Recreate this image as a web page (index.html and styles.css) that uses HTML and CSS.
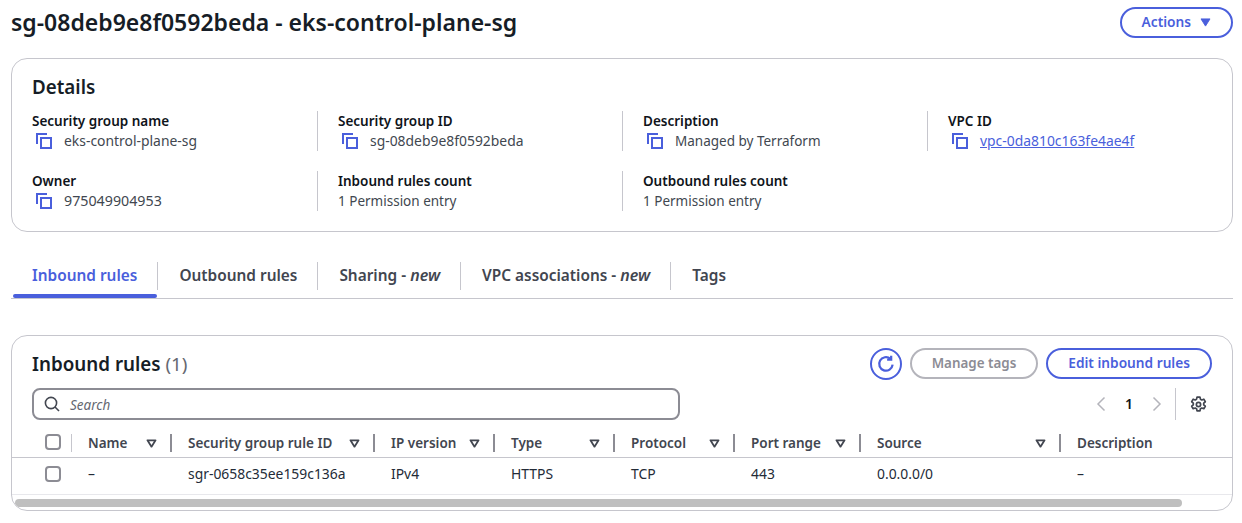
FILE: index.html
```html
<!DOCTYPE html>
<html lang="en">
<head>
<meta charset="utf-8">
<title>sg-08deb9e8f0592beda</title>
<link rel="stylesheet" href="styles.css">
</head>
<body>
<svg class="defs" width="0" height="0">
  <symbol id="copy" viewBox="0 0 16 16">
    <path d="M1 11V1h10" fill="none" stroke="currentColor" stroke-width="2"/>
    <rect x="5" y="5" width="10" height="10" fill="none" stroke="currentColor" stroke-width="2"/>
  </symbol>
  <symbol id="caret" viewBox="0 0 12 10">
    <path d="M1.500 1.500h9L6 8.500z" fill="none" stroke="currentColor" stroke-width="2" stroke-linejoin="round"/>
  </symbol>
</svg>
<header class="page-head">
  <h1>sg-08deb9e8f0592beda - eks-control-plane-sg</h1>
  <button class="btn btn-primary btn-actions">Actions
    <svg class="actions-caret" viewBox="0 0 12 10"><path d="M1 1h10L6 9z" fill="currentColor" stroke="currentColor" stroke-linejoin="round"/></svg>
  </button>
</header>

<section class="card details">
  <h2>Details</h2>
  <div class="kv-grid">
    <div class="kv"><div class="k">Security group name</div><div class="v id"><svg class="copy"><use href="#copy"/></svg>eks-control-plane-sg</div></div>
    <div class="kv"><div class="k">Security group ID</div><div class="v id"><svg class="copy"><use href="#copy"/></svg>sg-08deb9e8f0592beda</div></div>
    <div class="kv"><div class="k">Description</div><div class="v"><svg class="copy"><use href="#copy"/></svg>Managed by Terraform</div></div>
    <div class="kv"><div class="k">VPC ID</div><div class="v id"><svg class="copy"><use href="#copy"/></svg><a href="#">vpc-0da810c163fe4ae4f</a></div></div>
    <div class="kv"><div class="k">Owner</div><div class="v num"><svg class="copy"><use href="#copy"/></svg>975049904953</div></div>
    <div class="kv"><div class="k">Inbound rules count</div><div class="v">1 Permission entry</div></div>
    <div class="kv"><div class="k">Outbound rules count</div><div class="v">1 Permission entry</div></div>
  </div>
</section>

<nav class="tabs">
  <a class="tab active">Inbound rules</a>
  <a class="tab">Outbound rules</a>
  <a class="tab">Sharing - <em>new</em></a>
  <a class="tab">VPC associations - <em>new</em></a>
  <a class="tab">Tags</a>
</nav>

<section class="card rules">
  <div class="rules-head">
    <h2>Inbound rules <span class="count">(1)</span></h2>
    <div class="actions">
      <button class="btn-icon" aria-label="Refresh">
        <svg viewBox="0 0 16 16" width="18" height="18"><path d="M13.900 8.600A6 6 0 1 1 11.900 3.400" fill="none" stroke="currentColor" stroke-width="2"/><path d="M12.600 0.600v3.600H9" fill="none" stroke="currentColor" stroke-width="2"/></svg>
      </button>
      <button class="btn btn-disabled">Manage tags</button>
      <button class="btn btn-primary">Edit inbound rules</button>
    </div>
  </div>
  <div class="tools">
    <div class="search">
      <svg viewBox="0 0 16 16" width="16" height="16"><circle cx="7" cy="7" r="5.600" fill="none" stroke="currentColor" stroke-width="1.600"/><path d="M11 11l4 4" stroke="currentColor" stroke-width="1.600"/></svg>
      <span>Search</span>
    </div>
    <div class="pager">
      <svg class="chev" viewBox="0 0 10 16"><path d="M8.500 1.500 2 8l6.500 6.500" fill="none" stroke="currentColor" stroke-width="1.500"/></svg>
      <span class="page-num">1</span>
      <svg class="chev" viewBox="0 0 10 16"><path d="M1.500 1.500 8 8l-6.500 6.500" fill="none" stroke="currentColor" stroke-width="1.500"/></svg>
      <span class="pager-sep"></span>
      <svg class="gear" viewBox="0 0 16 16"><circle cx="8" cy="8" r="2" fill="none" stroke="currentColor" stroke-width="1.600"/><path d="M6.600 1h2.800l.4 2 1.300.7 1.900-.7 1.400 2.400-1.500 1.300v1.600l1.500 1.300-1.400 2.400-1.900-.7-1.300.7-.4 2H6.600l-.4-2-1.300-.7-1.900.7-1.400-2.400 1.500-1.300V6.700L1.600 5.400 3 3l1.900.7 1.300-.7z" fill="none" stroke="currentColor" stroke-width="1.600" stroke-linejoin="round"/></svg>
    </div>
  </div>
  <div class="table-wrap">
    <table>
      <thead>
        <tr>
          <th class="c-check"><span class="check"></span></th>
          <th class="c-name"><div class="th">Name<svg class="caret"><use href="#caret"/></svg></div></th>
          <th class="c-id"><div class="th">Security group rule ID<svg class="caret"><use href="#caret"/></svg></div></th>
          <th class="c-ip"><div class="th">IP version<svg class="caret"><use href="#caret"/></svg></div></th>
          <th class="c-type"><div class="th">Type<svg class="caret"><use href="#caret"/></svg></div></th>
          <th class="c-proto"><div class="th">Protocol<svg class="caret"><use href="#caret"/></svg></div></th>
          <th class="c-port"><div class="th">Port range<svg class="caret"><use href="#caret"/></svg></div></th>
          <th class="c-source"><div class="th">Source<svg class="caret"><use href="#caret"/></svg></div></th>
          <th class="c-desc"><div class="th">Description</div></th>
        </tr>
      </thead>
      <tbody>
        <tr>
          <td class="c-check"><span class="check"></span></td>
          <td>–</td>
          <td>sgr-0658c35ee159c136a</td>
          <td>IPv4</td>
          <td>HTTPS</td>
          <td>TCP</td>
          <td>443</td>
          <td>0.0.0.0/0</td>
          <td>–</td>
        </tr>
      </tbody>
    </table>
  </div>
  <div class="scrollbar"><div class="thumb"></div></div>
</section>
</body>
</html>
```
FILE: styles.css
```css
* { box-sizing: border-box; }
html, body { margin: 0; padding: 0; }
body {
  background: #fff;
  color: #0f141a;
  font-family: "Noto Sans", "Open Sans", sans-serif;
  font-size: 14px;
  line-height: 20px;
  padding: 0 9px 0 11px;
  height: 523px;
  overflow: hidden;
}
.defs { position: absolute; }
.page-head {
  display: flex;
  justify-content: space-between;
  align-items: flex-start;
  padding-top: 7px;
  height: 46px;
}
h1 { margin: 0; font-size: 23px; line-height: 30px; font-weight: 600; color: #161d26; }
.btn {
  font: 600 13.700px/20px "Noto Sans", "Open Sans", sans-serif;
  height: 31px;
  padding: 0 20px 1px;
  border-radius: 16px;
  background: #fff;
  display: inline-flex;
  align-items: center;
}
.btn-primary { border: 2px solid #4a5fdc; color: #4a5fdc; }
.btn-disabled { border: 2px solid #b4b4bb; color: #8c8c94; font-size: 13.400px; }
.btn-actions { gap: 9px; }
.actions-caret { width: 11px; height: 9px; }
.card {
  border: 1px solid #c6c6cd;
  border-radius: 16px;
  background: #fff;
}
.details { margin-top: 12px; height: 174px; padding: 16px 20px 0; }
h2 { margin: 0; font-size: 18.800px; line-height: 24px; font-weight: 600; color: #161d26; }
.kv-grid {
  display: grid;
  grid-template-columns: 285px 305px 305px 1fr;
  row-gap: 20px;
  margin-top: 12px;
}
.kv { border-left: 1px solid #c6c6cd; padding-left: 20px; height: 40px; }
.kv:nth-child(4n+1) { border-left: 0; padding-left: 0; }
.k { font-weight: 600; font-size: 13.500px; color: #0f141a; }
.v { display: flex; align-items: center; color: #414750; font-size: 13.500px; }
.v.id { font-size: 13.900px; }
.v.num { font-size: 14.250px; }
.copy { width: 16px; height: 16px; color: #4a5fdc; margin: 0 12px 0 4px; flex: none; }
.v a { color: #4a5fdc; text-decoration: underline; }
.tabs {
  display: flex;
  align-items: stretch;
  margin-top: 30px;
  height: 37px;
  border-bottom: 1px solid #c6c6cd;
  position: relative;
  font-weight: 600;
  font-size: 15.400px;
  color: #424650;
}
.tab {
  padding: 0 20px 0 21px;
  height: 28px;
  line-height: 27px;
  border-right: 1px solid #c6c6cd;
  position: relative;
  white-space: nowrap;
}
.tab:last-child { border-right: 0; }
.tab em { font-weight: 600; font-size: 16px; }
.tab.active { color: #4a5fdc; }
.tab.active::after {
  content: "";
  position: absolute;
  right: 0;
  left: 2px;
  top: 32px;
  height: 4px;
  border-radius: 2px;
  background: #4a5fdc;
}
.rules {
  margin-top: 36px;
  height: 176px;
  overflow: hidden;
  position: relative;
}
.rules-head {
  display: flex;
  justify-content: space-between;
  align-items: center;
  padding: 12px 20px 0;
}
.count { color: #656871; font-weight: 400; }
.actions { display: flex; align-items: flex-start; gap: 8px; }
.btn-icon {
  width: 32px;
  height: 32px;
  border-radius: 50%;
  border: 2px solid #4a5fdc;
  color: #4a5fdc;
  background: #fff;
  display: flex;
  align-items: center;
  justify-content: center;
  padding: 0;
}
.tools {
  display: flex;
  align-items: center;
  justify-content: space-between;
  padding: 8px 20px 0;
  height: 40px;
}
.search {
  width: 648px;
  height: 32px;
  border: 2px solid #8c8c94;
  border-radius: 8px;
  display: flex;
  align-items: center;
  gap: 10px;
  padding-left: 10px;
  color: #424650;
  font-style: italic;
}
.search span { color: #656871; font-size: 13.500px; padding-top: 2px; }
.pager { display: flex; align-items: center; height: 32px; color: #b4b4bb; margin-right: 5px; }
.chev { width: 10px; height: 16px; }
.page-num { color: #0f141a; font-weight: 600; margin: 0 19px; }
.pager-sep { width: 1px; height: 32px; background: #c6c6cd; margin: 0 14px 0 13px; }
.gear { width: 17px; height: 17px; color: #424650; }
.table-wrap { overflow: hidden; margin-top: 8px; }
table { border-collapse: collapse; table-layout: fixed; width: 1270px; }
th, td { padding: 0; text-align: left; white-space: nowrap; }
th { height: 29px; font-weight: 600; font-size: 13.500px; color: #424650; border-bottom: 1px solid #c6c6cd; vertical-align: top; padding-top: 6px; }
.th {
  display: flex;
  justify-content: space-between;
  align-items: center;
  height: 18px;
  padding: 0 13px 0 16px;
  border-right: 2px solid #8c8c94;
  line-height: 18px;
}
.c-desc .th { border-right: 0; }
.caret { width: 11px; height: 9px; color: #424650; flex: none; }
td { height: 37px; padding-left: 16px; color: #232b37; font-size: 13.900px; border-bottom: 1px solid #e8e8ec; padding-bottom: 4px; }
.c-check { width: 60px; padding-left: 33px; position: relative; }
th.c-check { padding-top: 5px; }
th.c-check::after {
  content: "";
  position: absolute;
  left: 59px;
  top: 6px;
  width: 1px;
  height: 18px;
  background: #c6c6cd;
}
.check {
  display: block;
  width: 16px;
  height: 16px;
  border: 2px solid #8c8c94;
  border-radius: 4px;
  background: #fff;
  margin-top: 1px;
}
td.c-check { padding-left: 33px; }
.c-name { width: 100px; }
.c-id { width: 203px; }
.c-ip { width: 120px; }
.c-type { width: 120px; }
.c-proto { width: 120px; }
.c-port { width: 126px; }
.c-source { width: 200px; }
.c-desc { width: 221px; }
.scrollbar { position: absolute; left: 0; right: 0; bottom: 0; height: 14px; padding: 3px; }
.thumb { height: 8px; width: 1167px; background: #bfbfbf; border-radius: 4px; }
```
